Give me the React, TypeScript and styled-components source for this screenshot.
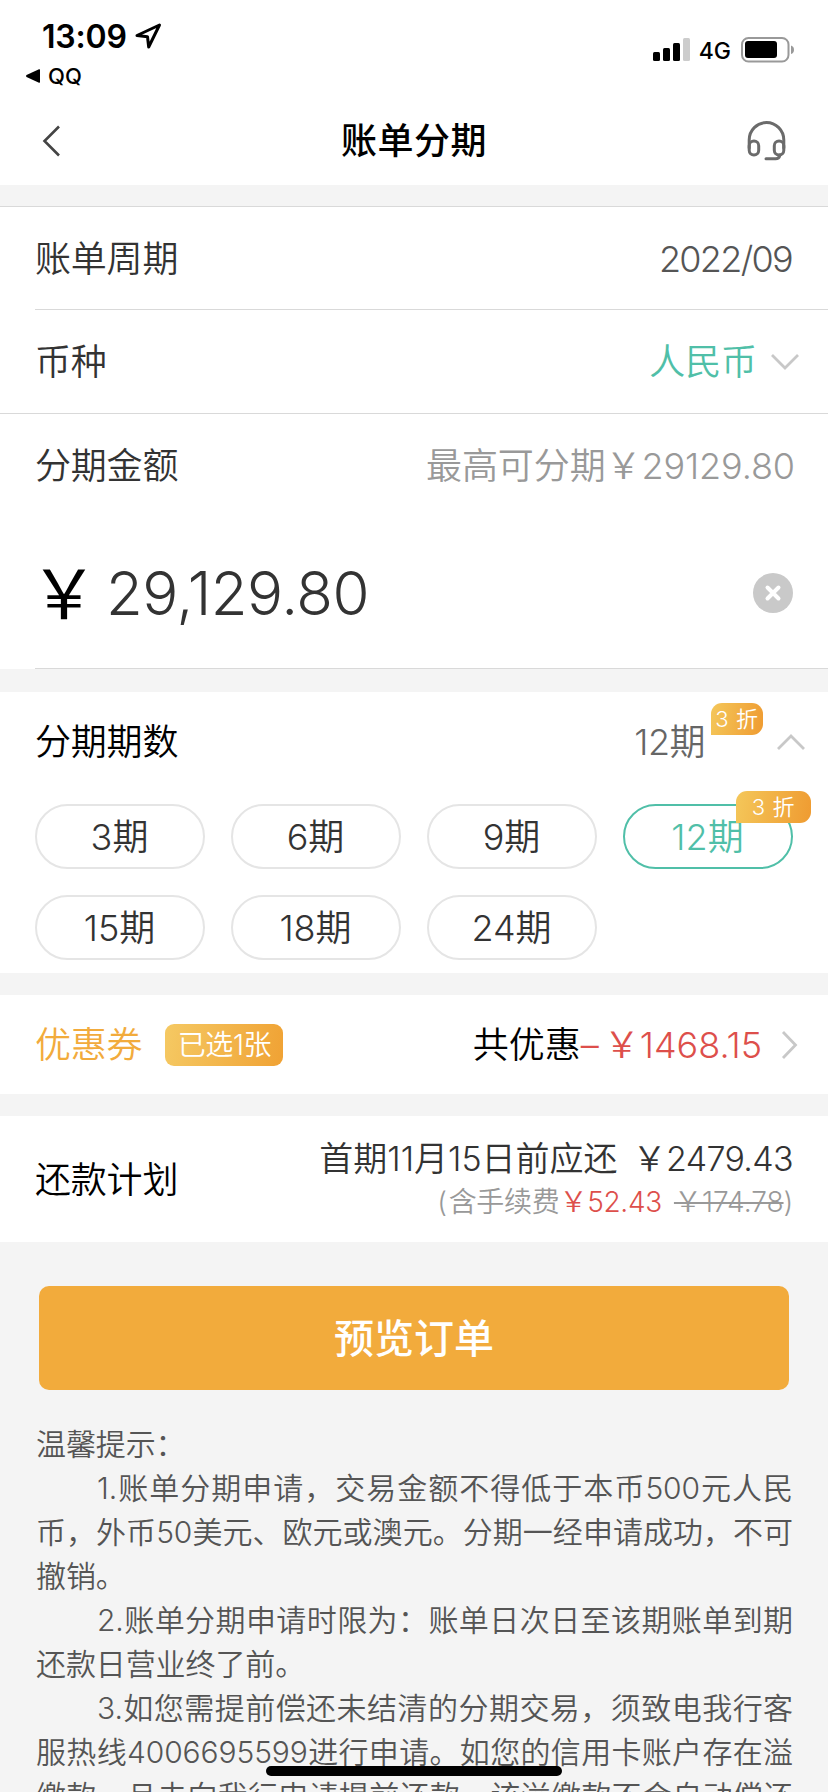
import React from "react";
import styled, { createGlobalStyle, css } from "styled-components";

const GlobalStyle = createGlobalStyle`
  * { box-sizing: border-box; }
  html, body { margin: 0; padding: 0; }
  body {
    width: 828px;
    height: 1792px;
    overflow: hidden;
    background: #f4f4f4;
    font-family: Inter, "Noto Sans CJK SC", sans-serif;
    font-weight: 350;
    color: #333;
  }
`;

const Screen = styled.main`
  position: relative;
  display: flex;
  flex-direction: column;
  width: 828px;
  height: 1792px;
  overflow: hidden;
  background: #f4f4f4;

  > * { flex-shrink: 0; }
`;

const StatusBar = styled.header`
  display: flex;
  justify-content: space-between;
  height: 96px;
  padding: 0 33px 0 26px;
  background: #fff;
  color: #000;
`;

const StatusLeft = styled.div`
  display: flex;
  flex-direction: column;
  padding-top: 16px;
`;

const Clock = styled.div`
  display: flex;
  align-items: center;
  gap: 8px;
  height: 40px;
  padding-left: 16px;
  font-size: 32px;
  font-weight: 600;
  letter-spacing: -0.2px;
`;

const BackToApp = styled.div`
  display: flex;
  align-items: center;
  gap: 7px;
  height: 40px;
  font-size: 22px;
  font-weight: 450;
`;

const StatusRight = styled.div`
  display: flex;
  align-items: flex-start;
  padding-top: 36px;
`;

const Network = styled.span`
  margin: 0 10px 0 8px;
  font-size: 23px;
  font-weight: 500;
  line-height: 30px;
`;

const NavBar = styled.nav`
  display: grid;
  grid-template-columns: 60px 1fr 60px;
  align-items: center;
  height: 89px;
  padding: 0 42px;
  background: #fff;
`;

const Title = styled.h1`
  margin: 0;
  font-size: 36px;
  font-weight: 500;
  line-height: 50px;
  text-align: center;
  color: #000;
  letter-spacing: 0.5px;
`;

const NavAction = styled.button`
  display: flex;
  justify-content: flex-end;
  padding: 0;
  border: 0;
  background: none;
`;

const BackAction = styled(NavAction)`
  justify-content: flex-start;
`;

const Section = styled.section<{ $gap?: number; $bordered?: boolean }>`
  display: flex;
  flex-direction: column;
  margin-top: ${(p) => p.$gap ?? 22}px;
  background: #fff;
  ${(p) => p.$bordered && css`border-top: 1px solid #d9d9d9;`}
`;

const Row = styled.div<{ $height: number; $right?: number }>`
  display: flex;
  align-items: center;
  justify-content: space-between;
  height: ${(p) => p.$height}px;
  padding: 1px ${(p) => p.$right ?? 36}px 0 35px;
  font-size: 36px;
  line-height: 50px;
`;

const Divider = styled.hr<{ $inset?: boolean }>`
  width: auto;
  height: 1px;
  margin: 0 0 0 ${(p) => (p.$inset ? 35 : 0)}px;
  border: 0;
  background: #d9d9d9;
`;

const Label = styled.span<{ $color?: string }>`
  color: ${(p) => p.$color ?? "#333"};
  letter-spacing: -0.2px;
`;

const Value = styled.span<{ $color: string; $tracking?: number }>`
  display: flex;
  align-items: center;
  height: 50px;
  color: ${(p) => p.$color};
  letter-spacing: ${(p) => p.$tracking ?? 0}px;
`;

const Amount = styled.div`
  display: flex;
  align-items: center;
  font-size: 60px;
  line-height: 80px;
  letter-spacing: -0.5px;
`;

const Currency = styled.span`
  width: 76px;
  margin-left: -5px;
  padding-bottom: 7px;
  font-family: "Noto Sans CJK SC", sans-serif;
  font-size: 68px;
  font-weight: 400;
  color: #000;
`;

const ChevronSlot = styled.span<{ $left: number }>`
  display: flex;
  margin-left: ${(p) => p.$left}px;
`;

const DiscountTag = styled.span<{ $width: number }>`
  display: flex;
  align-items: center;
  justify-content: center;
  width: ${(p) => p.$width}px;
  height: 32px;
  border-radius: 11px 11px 11px 0;
  background: linear-gradient(100deg, #f4c75a, #ef9b31);
  color: #fff;
  font-size: 22px;
  line-height: 32px;
  letter-spacing: 0.6px;
  white-space: nowrap;
`;

const RaisedTag = styled.span`
  align-self: flex-start;
  margin: -14px 0 0 6px;
`;

const PeriodGrid = styled.div`
  display: grid;
  grid-template-columns: repeat(4, 170px);
  gap: 26px;
  padding: 14px 35px 13px;
`;

const Period = styled.button<{ $active?: boolean }>`
  position: relative;
  display: flex;
  align-items: center;
  justify-content: center;
  height: 65px;
  padding: 0 1px 5px 0;
  border: 2px solid ${(p) => (p.$active ? "#50bfa8" : "#e5e5e5")};
  border-radius: 33px;
  background: #fff;
  color: ${(p) => (p.$active ? "#50bfa8" : "#333")};
  font: inherit;
  font-size: 36px;
`;

const CornerTag = styled.span`
  position: absolute;
  top: -15px;
  right: -20px;
`;

const CouponGroup = styled.div`
  display: flex;
  align-items: center;
`;

const CouponBadge = styled.span`
  display: flex;
  align-items: center;
  justify-content: center;
  width: 118px;
  height: 42px;
  margin-left: 23px;
  padding-bottom: 1px;
  border-radius: 9px;
  background: linear-gradient(100deg, #f5c963, #f0a234);
  color: #fff;
  font-size: 28px;
  letter-spacing: -0.4px;
`;

const CouponMinus = styled.span`
  margin-right: 5px;
  color: #dd4f4b;
`;

const PlanDetail = styled.div`
  display: flex;
  flex-direction: column;
  align-items: flex-end;
`;

const PlanMain = styled.span`
  display: flex;
  gap: 15px;
  font-size: 34px;
  line-height: 46px;
`;

const PlanSum = styled.span`
  letter-spacing: -0.65px;
`;

const PlanFee = styled.span`
  display: flex;
  font-size: 28px;
  line-height: 41px;
  color: #999;
  letter-spacing: -0.3px;
`;

const FeeOpen = styled.span`
  margin-right: 2px;
`;

const FeeNow = styled.span`
  margin-right: 12px;
  color: #dd4f4b;
`;

const Red = styled.span`
  color: #dd4f4b;
`;

const Strike = styled.s`
  letter-spacing: 0;
  text-decoration-thickness: 2px;
`;

const Submit = styled.button`
  height: 104px;
  margin: 44px 39px 0;
  padding: 0 0 4px;
  border: 0;
  border-radius: 10px;
  background: #f2ab3c;
  color: #fff;
  font: inherit;
  font-size: 40px;
  font-weight: 500;
`;

const Tips = styled.div`
  display: flex;
  flex-direction: column;
  margin: 32px 35px 0 36px;
  color: #555;
  font-size: 30px;
  line-height: 44px;
`;

const TipLine = styled.div<{ $indent?: boolean; $full?: boolean }>`
  flex: none;
  height: 44px;
  padding-left: ${(p) => (p.$indent ? 61 : 0)}px;
  white-space: nowrap;
  letter-spacing: -0.1px;
  ${(p) => p.$full && css`
    text-align: justify;
    text-align-last: justify;
    text-justify: inter-character;
  `}
`;

const HomeIndicator = styled.div`
  position: absolute;
  left: 266px;
  bottom: 16px;
  width: 296px;
  height: 10px;
  border-radius: 5px;
  background: #000;
`;

type Dir = "down" | "up" | "right";

const chevrons: Record<Dir, { w: number; h: number; d: string }> = {
  down: { w: 30, h: 18, d: "M2 2 L15 15 L28 2" },
  up: { w: 30, h: 18, d: "M2 16 L15 3 L28 16" },
  right: { w: 18, h: 30, d: "M2 2 L14.5 15 L2 28" },
};

const Chevron = ({ dir }: { dir: Dir }) => {
  const c = chevrons[dir];
  return (
    <svg width={c.w} height={c.h} fill="none" stroke="#c8c8c8" strokeWidth="2.8">
      <path d={c.d} />
    </svg>
  );
};

const periods = [3, 6, 9, 12, 15, 18, 24];

const tips: { text: string; indent?: boolean; full?: boolean }[] = [
  { text: "温馨提示：" },
  { text: "1.账单分期申请，交易金额不得低于本币500元人民", indent: true, full: true },
  { text: "币，外币50美元、欧元或澳元。分期一经申请成功，不可", full: true },
  { text: "撤销。" },
  { text: "2.账单分期申请时限为：账单日次日至该期账单到期", indent: true, full: true },
  { text: "还款日营业终了前。" },
  { text: "3.如您需提前偿还未结清的分期交易，须致电我行客", indent: true, full: true },
  { text: "服热线4006695599进行申请。如您的信用卡账户存在溢", full: true },
  { text: "缴款，且未向我行申请提前还款，该溢缴款不会自动偿还", full: true },
];

export default function App() {
  return (
    <Screen>
      <GlobalStyle />
      <StatusBar>
        <StatusLeft>
          <Clock>
            13:09
            <svg width="27" height="27" fill="none" stroke="#000" strokeWidth="3" strokeLinejoin="round">
              <path d="M24.5 2 L2 12.5 L12.5 13.8 L13.7 24 Z" />
            </svg>
          </Clock>
          <BackToApp>
            <svg width="15" height="14">
              <path d="M0.5 6 L13 0.3 Q14 0 14 1 V13 Q14 14 13 13.7 L0.5 8 Q-0.4 7 0.5 6Z" />
            </svg>
            QQ
          </BackToApp>
        </StatusLeft>
        <StatusRight>
          <svg width="38" height="26">
            <rect x="0" y="16" width="7" height="9" rx="1.5" />
            <rect x="10" y="12" width="7" height="13" rx="1.5" />
            <rect x="20" y="7" width="7" height="18" rx="1.5" />
            <rect x="30" y="2" width="7" height="23" rx="1.5" fill="#ccc" />
          </svg>
          <Network>4G</Network>
          <svg width="54" height="27">
            <rect x="1" y="2" width="46.5" height="23.5" rx="6.5" fill="none" stroke="#999" strokeWidth="2" />
            <rect x="4" y="5" width="32" height="17" rx="3" />
            <path d="M50 9.5 Q53 10.5 53 13.7 Q53 17 50 18Z" fill="#999" />
          </svg>
        </StatusRight>
      </StatusBar>

      <NavBar>
        <BackAction aria-label="返回">
          <svg width="20" height="32" fill="none" stroke="#444" strokeWidth="2.6">
            <path d="M17 1.5 L2.5 16 L17 30.5" />
          </svg>
        </BackAction>
        <Title>账单分期</Title>
        <NavAction aria-label="客服">
          <svg width="40" height="42" fill="none" stroke="#6b6b6b" strokeWidth="3" strokeLinecap="round">
            <path d="M3.2 28 V20 A17.3 17.5 0 0 1 37.8 20 V28" />
            <rect x="3.2" y="21" width="9.5" height="14" rx="4.75" />
            <rect x="28.3" y="21" width="9.5" height="14" rx="4.75" />
            <path d="M34 35 Q33 38.8 29.5 38.8 H20" />
          </svg>
        </NavAction>
      </NavBar>

      <Section $gap={21} $bordered>
        <Row $height={102}>
          <Label>账单周期</Label>
          <Value $color="#555" $tracking={-1.7}>2022/09</Value>
        </Row>
        <Divider $inset />
        <Row $height={103} $right={28}>
          <Label>币种</Label>
          <Value $color="#50bfa8" $tracking={-0.1}>
            人民币
            <ChevronSlot $left={13}><Chevron dir="down" /></ChevronSlot>
          </Value>
        </Row>
        <Divider />
        <Row $height={103} $right={33}>
          <Label>分期金额</Label>
          <Value $color="#999" $tracking={-0.1}>最高可分期￥29129.80</Value>
        </Row>
        <Row $height={151} $right={35}>
          <Amount>
            <Currency>￥</Currency>
            29,129.80
          </Amount>
          <svg width="40" height="40" stroke="#fff" strokeWidth="4" strokeLinecap="round">
            <circle cx="20" cy="20" r="20" fill="#c9c9c9" stroke="none" />
            <path d="M14.5 14.5 L25.5 25.5 M25.5 14.5 L14.5 25.5" />
          </svg>
        </Row>
        <Divider $inset />
      </Section>

      <Section $gap={23}>
        <Row $height={98} $right={22}>
          <Label $color="#000">分期期数</Label>
          <Value $color="#666" $tracking={-0.5}>
            12期
            <RaisedTag>
              <DiscountTag $width={52}>3 折</DiscountTag>
            </RaisedTag>
            <ChevronSlot $left={13}><Chevron dir="up" /></ChevronSlot>
          </Value>
        </Row>
        <PeriodGrid>
          {periods.map((n) => (
            <Period key={n} $active={n === 12}>
              {n}期
              {n === 12 && (
                <CornerTag>
                  <DiscountTag $width={75}>3 折</DiscountTag>
                </CornerTag>
              )}
            </Period>
          ))}
        </PeriodGrid>
      </Section>

      <Section>
        <Row $height={99} $right={29}>
          <CouponGroup>
            <Label $color="#f2ab3c">优惠券</Label>
            <CouponBadge>已选1张</CouponBadge>
          </CouponGroup>
          <Value $color="#000">
            共优惠<CouponMinus>–</CouponMinus><Red>￥1468.15</Red>
            <ChevronSlot $left={19}><Chevron dir="right" /></ChevronSlot>
          </Value>
        </Row>
      </Section>

      <Section>
        <Row $height={126} $right={35}>
          <Label $color="#000">还款计划</Label>
          <PlanDetail>
            <PlanMain>
              <span>首期11月15日前应还</span>
              <PlanSum>￥2479.43</PlanSum>
            </PlanMain>
            <PlanFee>
              <FeeOpen>(</FeeOpen>含手续费<FeeNow>￥52.43</FeeNow><Strike>￥174.78</Strike>)
            </PlanFee>
          </PlanDetail>
        </Row>
      </Section>

      <Submit>预览订单</Submit>

      <Tips>
        {tips.map((t) => (
          <TipLine key={t.text} $indent={t.indent} $full={t.full}>{t.text}</TipLine>
        ))}
      </Tips>
      <HomeIndicator />
    </Screen>
  );
}
